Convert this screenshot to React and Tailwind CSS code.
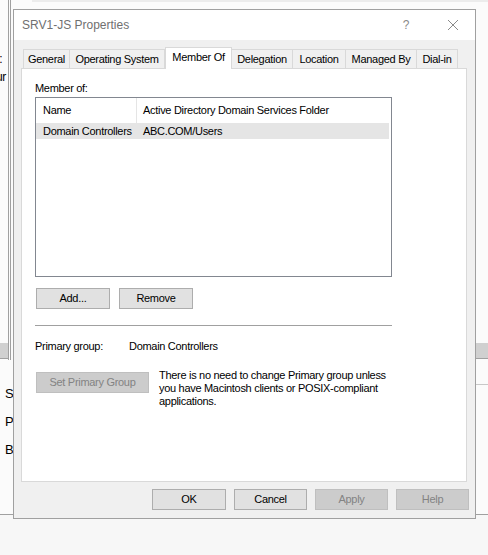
import React from 'react';

const tabs = [
  { label: 'General', w: 'w-[47px]' },
  { label: 'Operating System', w: 'w-[95px]' },
  { label: 'Member Of', w: 'w-[67px]', active: true },
  { label: 'Delegation', w: 'w-[61px]' },
  { label: 'Location', w: 'w-[53px]' },
  { label: 'Managed By', w: 'w-[71px]' },
  { label: 'Dial-in', w: 'w-[41px]' },
];

const Btn = ({ children, w, disabled }) => (
  <div
    className={`h-[21px] ${w} shrink-0 flex items-center justify-center border whitespace-nowrap ${
      disabled ? 'bg-[#cccccc] border-[#bfbfbf] text-[#838383]' : 'bg-[#e1e1e1] border-[#adadad] text-black'
    }`}
  >
    {children}
  </div>
);

const App = () => {
  return (
    <div className="relative w-[488px] h-[555px] overflow-hidden bg-[#f7f7f7] font-['Liberation_Sans',Arial,sans-serif] text-[11px] tracking-[-0.3px] text-black">
      {/* window behind the dialog */}
      <div className="absolute left-0 top-0 w-[488px] h-[515px] bg-[#fbfbfb] border-b border-[#a0a0a0]"></div>
      <div className="absolute left-[32px] top-0 w-[456px] h-[2px] bg-[#ececec]"></div>
      <div className="absolute left-[8px] top-0 w-[3px] h-[360px] border-x border-[#a0a0a0]"></div>
      <div className="absolute left-0 top-[343px] w-[8px] h-[16px] bg-[#d0d0d0] border-b border-[#a0a0a0]"></div>
      <div className="absolute left-[476px] top-[343px] w-[12px] h-[16px] bg-[#d0d0d0] border-b border-[#a0a0a0]"></div>
      <div className="absolute left-[476px] top-[384px] w-[12px] h-px bg-[#c8c8c8]"></div>
      <div className="absolute left-0 top-[50px] w-[8px] overflow-hidden text-[12px] leading-[18px]">
        <div className="-ml-[3px]">l:</div>
        <div className="-ml-[4px]">ur</div>
      </div>
      <div className="absolute left-[5px] top-[380px] w-[8px] overflow-hidden text-[13px] leading-[28px]">
        <div>S</div>
        <div>P</div>
        <div>B</div>
      </div>

      {/* dialog */}
      <div className="absolute left-[13px] top-[9px] w-[463px] h-[510px] border border-[#a0a0a0] bg-[#f0f0f0] flex flex-col">
        <div className="h-[30px] bg-white flex items-center pl-[8px] shrink-0">
          <span className="text-[12px] tracking-normal text-[#707070] flex-1">SRV1-JS Properties</span>
          <span className="text-[12px] text-[#8a8a8a] w-[10px] text-center mr-[36px]">?</span>
          <svg width="12" height="12" viewBox="0 0 12 12" className="mr-[16px]">
            <path d="M1 1 L11 11 M11 1 L1 11" stroke="#8a8a8a" strokeWidth="1" />
          </svg>
        </div>

        <div className="pl-[7px] pt-[7px] flex flex-col">
          <div className="flex items-end h-[21px] pl-[2px]">
            {tabs.map((t) =>
              t.active ? (
                <div
                  key={t.label}
                  className={`${t.w} h-[22px] -mb-px relative z-10 bg-white border-x border-t border-[#d9d9d9] flex items-center justify-center pb-[3px] whitespace-nowrap`}
                >
                  {t.label}
                </div>
              ) : (
                <div
                  key={t.label}
                  className={`${t.w} h-[19px] bg-[#f0f0f0] border-t border-r border-[#d9d9d9] first:border-l flex items-center justify-center whitespace-nowrap`}
                >
                  {t.label}
                </div>
              )
            )}
          </div>

          <div className="w-[446px] h-[414px] bg-white border border-[#d9d9d9] pl-[13px] pt-[11px] flex flex-col">
            <div className="h-[17px]">Member of:</div>
            <div className="w-[357px] h-[180px] border border-[#828790] flex flex-col">
              <div className="h-[25px] flex items-center mr-[2px]">
                <div className="w-[101px] h-full pl-[7px] flex items-center border-r border-[#e5e5e5]">Name</div>
                <div className="pl-[6px] whitespace-nowrap">Active Directory Domain Services Folder</div>
              </div>
              <div className="h-[16px] flex items-center bg-[#e5e5e5] mr-[2px]">
                <div className="w-[101px] pl-[7px] whitespace-nowrap">Domain Controllers</div>
                <div className="pl-[6px] whitespace-nowrap">ABC.COM/Users</div>
              </div>
            </div>

            <div className="flex gap-[9px] mt-[11px] pl-px">
              <Btn w="w-[74px]">Add...</Btn>
              <Btn w="w-[74px]">Remove</Btn>
            </div>

            <div className="w-[357px] h-px bg-[#a0a0a0] mt-[16px]"></div>

            <div className="flex mt-[13px] h-[14px] items-center">
              <div className="w-[94px]">Primary group:</div>
              <div>Domain Controllers</div>
            </div>

            <div className="flex mt-[19px] pl-px">
              <Btn w="w-[113px]" disabled>Set Primary Group</Btn>
              <div className="ml-[10px] w-[238px] leading-[13px] mt-[-3px]">
                There is no need to change Primary group unless you have Macintosh clients or POSIX-compliant applications.
              </div>
            </div>
          </div>

          <div className="flex gap-[8px] mt-[7px] pl-[131px]">
            <Btn w="w-[74px]">OK</Btn>
            <Btn w="w-[73px]">Cancel</Btn>
            <Btn w="w-[73px]" disabled>Apply</Btn>
            <Btn w="w-[73px]" disabled>Help</Btn>
          </div>
        </div>
      </div>
    </div>
  );
};

export default App;
